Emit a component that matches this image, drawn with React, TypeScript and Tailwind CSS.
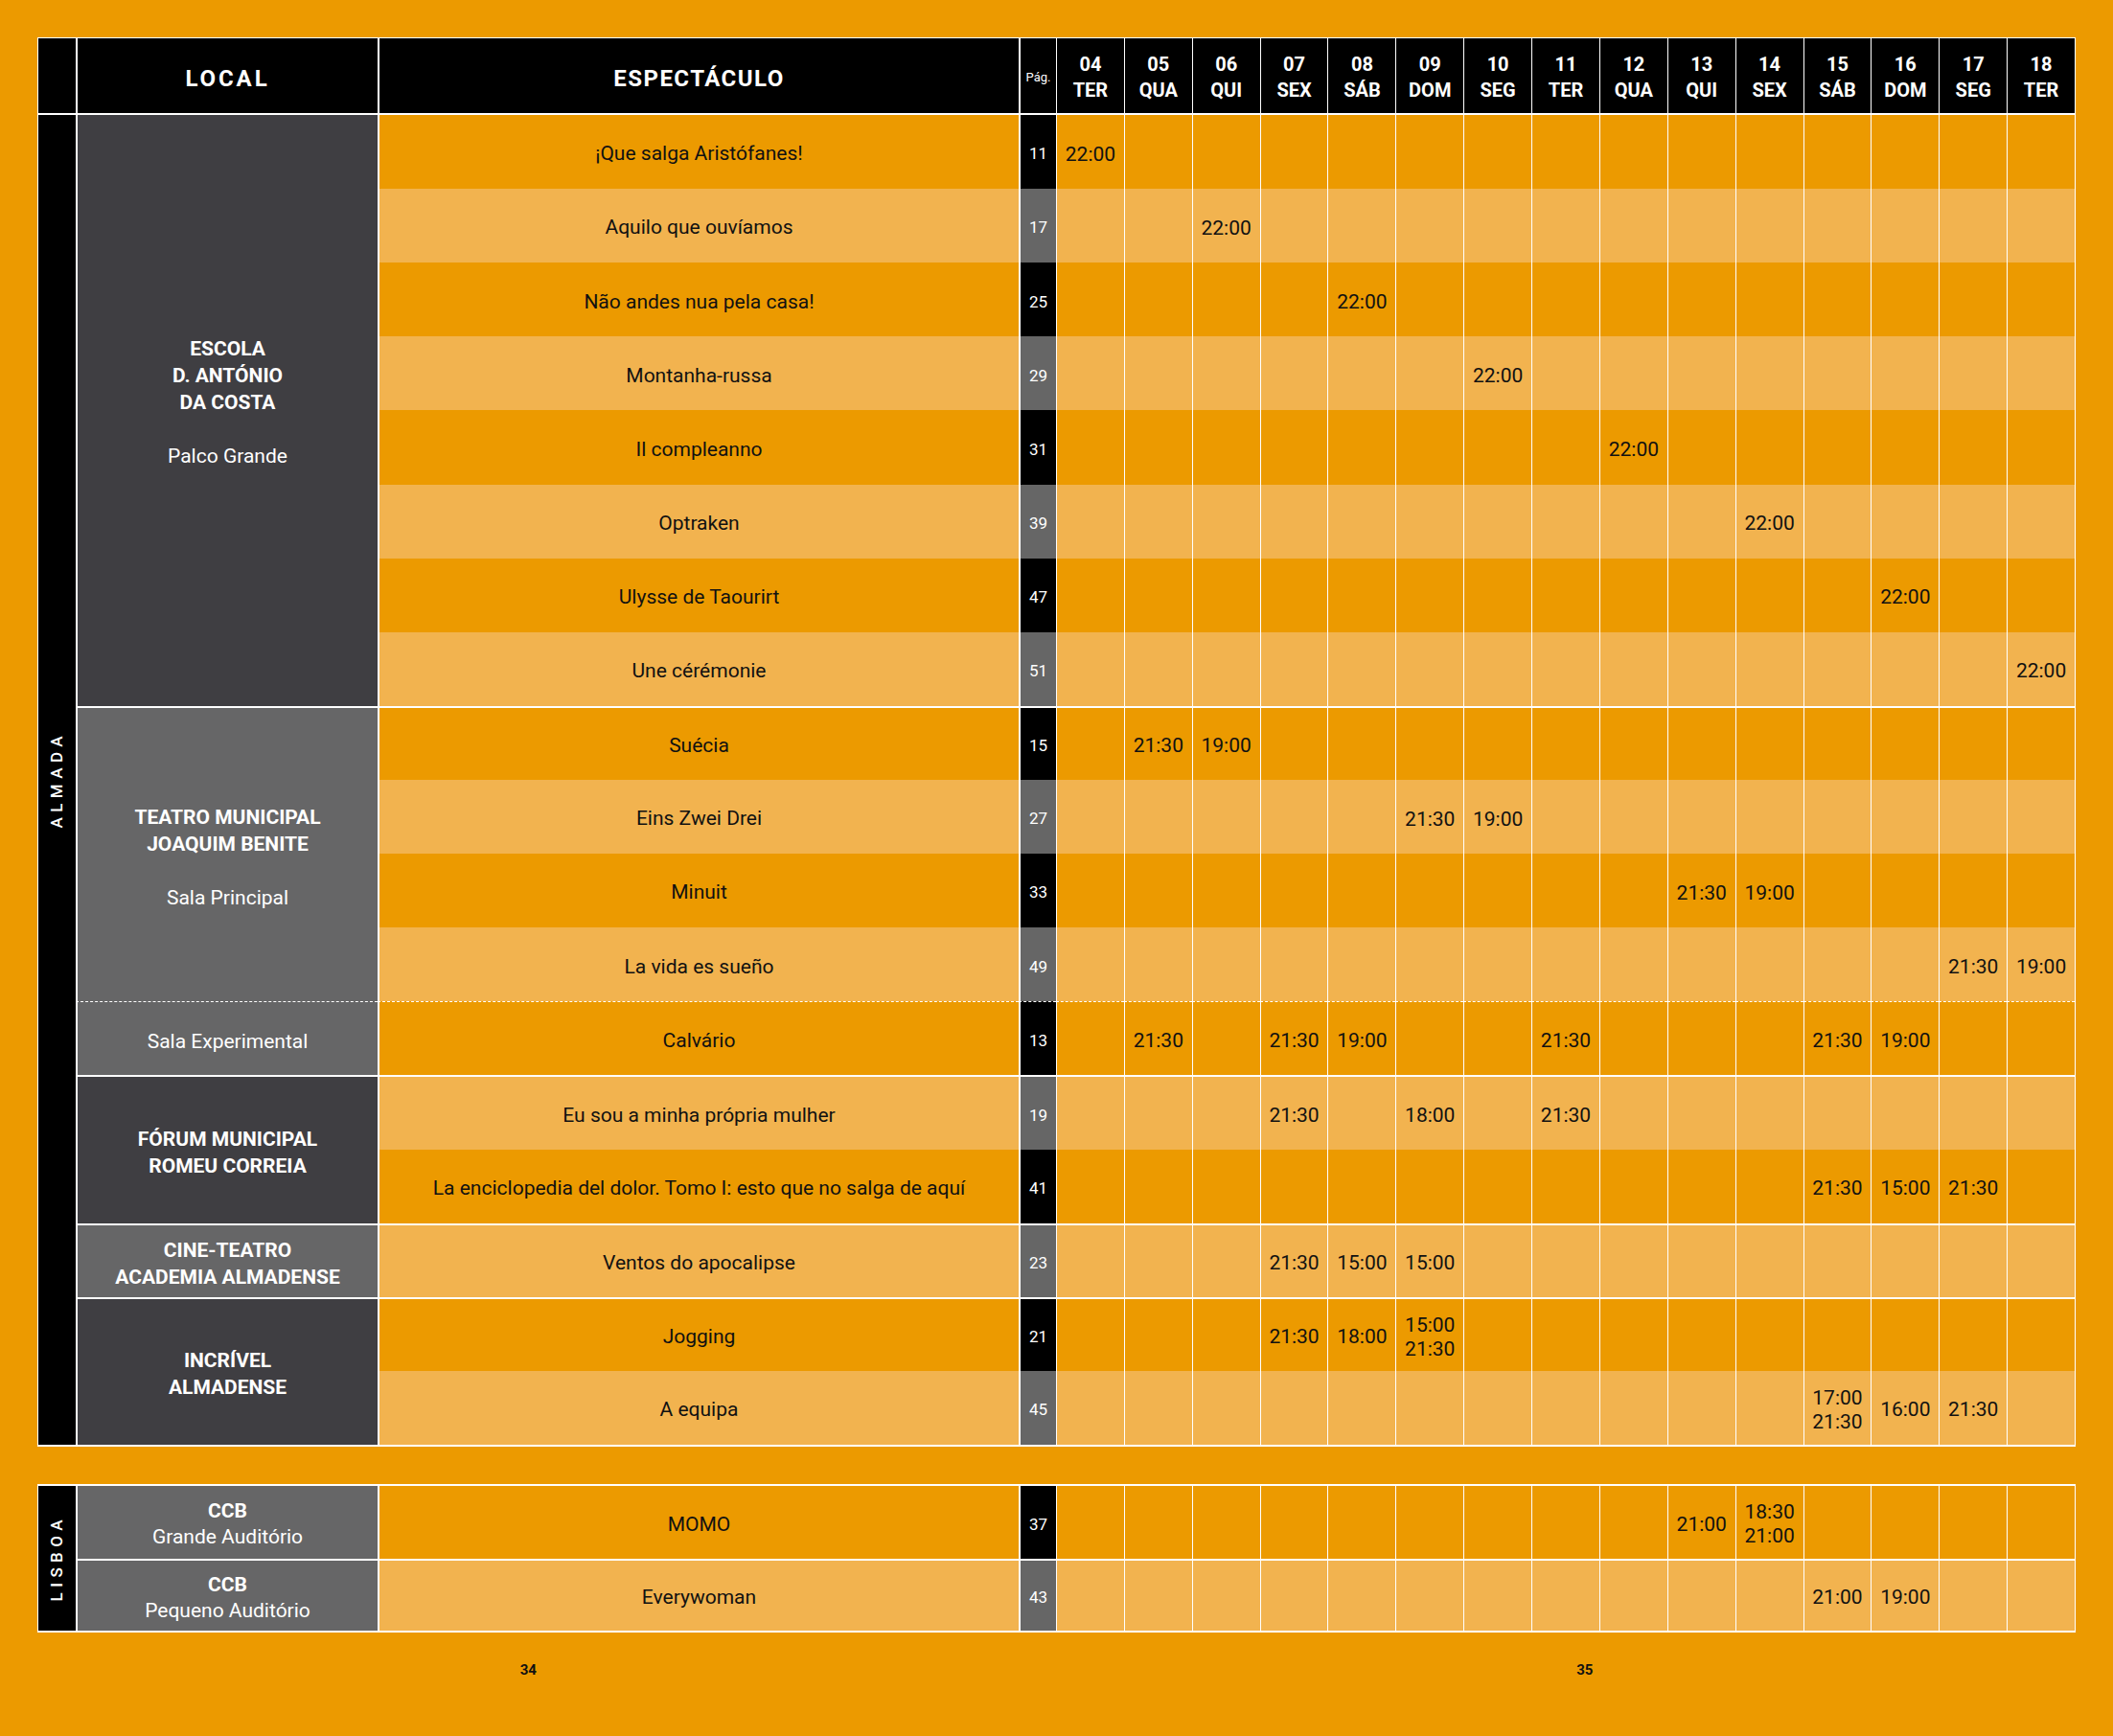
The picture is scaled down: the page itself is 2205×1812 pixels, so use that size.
import React from 'react';

type Row = { title: string; pag: string; times: Record<number, string[]> };
type Group = {
  tone: 'dark' | 'mid';
  name: string[];
  sub?: string;
  span: number;
  dashed?: boolean;
  lift?: boolean;
  rows: Row[];
};

const days: [string, string][] = [
  ['04', 'TER'], ['05', 'QUA'], ['06', 'QUI'], ['07', 'SEX'], ['08', 'SÁB'],
  ['09', 'DOM'], ['10', 'SEG'], ['11', 'TER'], ['12', 'QUA'], ['13', 'QUI'],
  ['14', 'SEX'], ['15', 'SÁB'], ['16', 'DOM'], ['17', 'SEG'], ['18', 'TER'],
];

const almada: Group[] = [
  {
    tone: 'dark', name: ['ESCOLA', 'D. ANTÓNIO', 'DA COSTA'], sub: 'Palco Grande', span: 8, lift: true,
    rows: [
      { title: '¡Que salga Aristófanes!', pag: '11', times: { 0: ['22:00'] } },
      { title: 'Aquilo que ouvíamos', pag: '17', times: { 2: ['22:00'] } },
      { title: 'Não andes nua pela casa!', pag: '25', times: { 4: ['22:00'] } },
      { title: 'Montanha-russa', pag: '29', times: { 6: ['22:00'] } },
      { title: 'Il compleanno', pag: '31', times: { 8: ['22:00'] } },
      { title: 'Optraken', pag: '39', times: { 10: ['22:00'] } },
      { title: 'Ulysse de Taourirt', pag: '47', times: { 12: ['22:00'] } },
      { title: 'Une cérémonie', pag: '51', times: { 14: ['22:00'] } },
    ],
  },
  {
    tone: 'mid', name: ['TEATRO MUNICIPAL', 'JOAQUIM BENITE'], sub: 'Sala Principal', span: 4,
    rows: [
      { title: 'Suécia', pag: '15', times: { 1: ['21:30'], 2: ['19:00'] } },
      { title: 'Eins Zwei Drei', pag: '27', times: { 5: ['21:30'], 6: ['19:00'] } },
      { title: 'Minuit', pag: '33', times: { 9: ['21:30'], 10: ['19:00'] } },
      { title: 'La vida es sueño', pag: '49', times: { 13: ['21:30'], 14: ['19:00'] } },
    ],
  },
  {
    tone: 'mid', name: [], sub: 'Sala Experimental', span: 1, dashed: true,
    rows: [
      { title: 'Calvário', pag: '13', times: { 1: ['21:30'], 3: ['21:30'], 4: ['19:00'], 7: ['21:30'], 11: ['21:30'], 12: ['19:00'] } },
    ],
  },
  {
    tone: 'dark', name: ['FÓRUM MUNICIPAL', 'ROMEU CORREIA'], span: 2,
    rows: [
      { title: 'Eu sou a minha própria mulher', pag: '19', times: { 3: ['21:30'], 5: ['18:00'], 7: ['21:30'] } },
      { title: 'La enciclopedia del dolor. Tomo I: esto que no salga de aquí', pag: '41', times: { 11: ['21:30'], 12: ['15:00'], 13: ['21:30'] } },
    ],
  },
  {
    tone: 'mid', name: ['CINE-TEATRO', 'ACADEMIA ALMADENSE'], span: 1,
    rows: [
      { title: 'Ventos do apocalipse', pag: '23', times: { 3: ['21:30'], 4: ['15:00'], 5: ['15:00'] } },
    ],
  },
  {
    tone: 'dark', name: ['INCRÍVEL', 'ALMADENSE'], span: 2,
    rows: [
      { title: 'Jogging', pag: '21', times: { 3: ['21:30'], 4: ['18:00'], 5: ['15:00', '21:30'] } },
      { title: 'A equipa', pag: '45', times: { 11: ['17:00', '21:30'], 12: ['16:00'], 13: ['21:30'] } },
    ],
  },
];

const lisboa: Group[] = [
  {
    tone: 'mid', name: ['CCB'], sub: 'Grande Auditório', span: 1, rows: [
      { title: 'MOMO', pag: '37', times: { 9: ['21:00'], 10: ['18:30', '21:00'] } },
    ],
  },
  {
    tone: 'mid', name: ['CCB'], sub: 'Pequeno Auditório', span: 1, rows: [
      { title: 'Everywoman', pag: '43', times: { 11: ['21:00'], 12: ['19:00'] } },
    ],
  },
];

const spanClass: Record<number, string> = {
  1: 'row-span-1',
  2: 'row-span-2',
  4: 'row-span-4',
  8: 'row-span-8',
};

function topBorder(first: boolean, start: boolean, dashed?: boolean) {
  if (first || !start) return '';
  return dashed ? 'border-t border-t-white [border-top-style:dashed]' : 'border-t-2 border-t-white';
}

function LocalCell({ g, first, compact }: { g: Group; first: boolean; compact?: boolean }) {
  const bg = g.tone === 'dark' ? 'bg-[#3f3e42]' : 'bg-[#666667]';
  return (
    <div
      className={`${spanClass[g.span]} col-start-2 ${bg} border-l-2 border-l-white ${topBorder(first, true, g.dashed)} flex flex-col items-center justify-center text-center text-white text-[21px] pt-[5px] ${compact ? 'leading-[27px]' : 'leading-[28px]'} ${g.lift ? 'pb-[22px]' : ''}`}
    >
      {g.name.map((n) => (
        <div key={n} className="font-bold">{n}</div>
      ))}
      {g.sub && g.name.length > 0 && !compact && <div className="h-[28px]" />}
      {g.sub && <div>{g.sub}</div>}
    </div>
  );
}

function RowCells({ r, idx, start, first, dashed }: { r: Row; idx: number; start: boolean; first: boolean; dashed?: boolean }) {
  const light = idx % 2 === 1;
  const bg = light ? 'bg-[#f2b34f]' : 'bg-[#ec9a00]';
  const tb = topBorder(first, start, dashed);
  return (
    <>
      <div className={`${bg} ${tb} border-l-2 border-l-white flex items-center justify-center text-center text-[21px] text-[#111] pt-[5px]`}>
        {r.title}
      </div>
      <div className={`${light ? 'bg-[#666666]' : 'bg-black'} ${tb} border-l-2 border-l-white flex items-center justify-center text-white text-[17px] pt-[5px]`}>
        {r.pag}
      </div>
      {days.map((_, d) => (
        <div key={d} className={`${bg} ${tb} border-l border-l-white flex flex-col items-center justify-center text-[21px] leading-[25px] text-[#111] pt-[5px]`}>
          {(r.times[d] || []).map((t, k) => (
            <div key={k}>{t}</div>
          ))}
        </div>
      ))}
    </>
  );
}

function Section({ groups, label, rowsClass, compact }: { groups: Group[]; label: string; rowsClass: string; compact?: boolean }) {
  let idx = 0;
  const cells: React.ReactNode[] = [];
  groups.forEach((g, gi) => {
    cells.push(<LocalCell key={`l${gi}`} g={g} first={gi === 0} compact={compact} />);
    g.rows.forEach((r, ri) => {
      cells.push(
        <RowCells key={`r${gi}-${ri}`} r={r} idx={idx} start={ri === 0} first={gi === 0 && ri === 0} dashed={g.dashed} />
      );
      idx++;
    });
  });
  const total = groups.reduce((s, g) => s + g.span, 0);
  return (
    <div className={`grid grid-cols-[39px_315px_669px_39px_repeat(15,minmax(0,1fr))] ${rowsClass}`}>
      <div className={`col-start-1 row-start-1 ${total === 18 ? 'row-span-18' : 'row-span-2'} bg-black flex items-center justify-center`}>
        <span className="[writing-mode:vertical-rl] rotate-180 text-white text-[17px] font-medium tracking-[0.32em] leading-none">
          {label}
        </span>
      </div>
      {cells}
    </div>
  );
}

export default function App() {
  return (
    <div className="min-h-[1812px] w-[2205px] bg-[#ec9a00] pt-[39px] px-[39px] font-['Roboto',sans-serif]">
      <div className="w-[2127px] border-x border-t border-white">
        <div className="grid grid-cols-[39px_315px_669px_39px_repeat(15,minmax(0,1fr))] h-[80px] border-b-2 border-white bg-black text-white">
          <div />
          <div className="border-l-2 border-l-white flex items-center justify-center pt-[5px] text-[24px] font-bold tracking-[0.12em]">LOCAL</div>
          <div className="border-l-2 border-l-white flex items-center justify-center pt-[5px] text-[24px] font-bold tracking-[0.06em]">ESPECTÁCULO</div>
          <div className="border-l-2 border-l-white flex items-center justify-center pt-[3px] text-[13px]">Pág.</div>
          {days.map(([n, w]) => (
            <div key={n} className="border-l border-l-white flex flex-col items-center justify-center pt-[4px] text-[20px] font-bold leading-[27px]">
              <div>{n}</div>
              <div>{w}</div>
            </div>
          ))}
        </div>
        <div className="border-b-2 border-white">
          <Section groups={almada} label="ALMADA" rowsClass="grid-rows-[repeat(18,minmax(0,1fr))] h-[1388px]" />
        </div>
      </div>
      <div className="mt-[39px] w-[2127px] border-x border-y-2 border-white">
        <Section groups={lisboa} label="LISBOA" rowsClass="grid-rows-[repeat(2,minmax(0,1fr))] h-[151px]" compact />
      </div>
      <div className="flex -mx-[39px] mt-[28px] text-[15px] font-bold text-[#111]">
        <div className="w-1/2 text-center">34</div>
        <div className="w-1/2 text-center">35</div>
      </div>
    </div>
  );
}
